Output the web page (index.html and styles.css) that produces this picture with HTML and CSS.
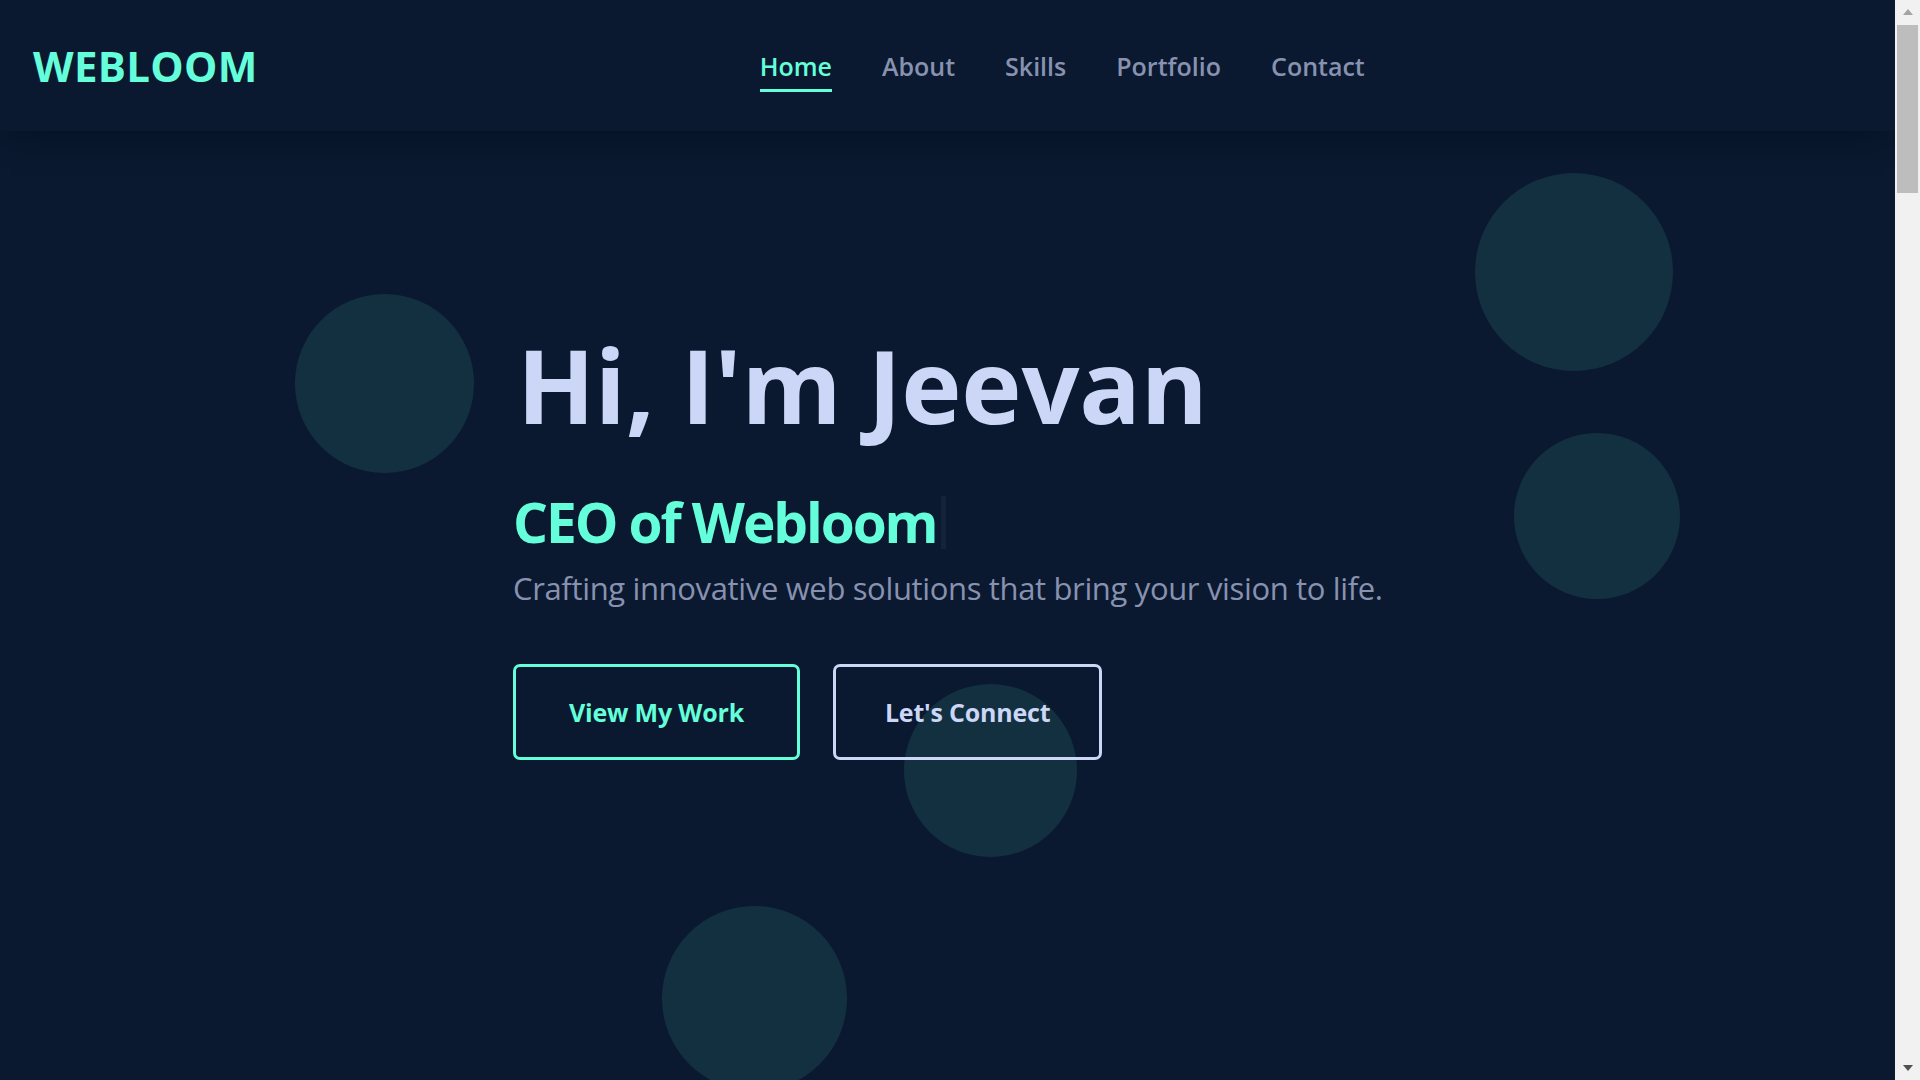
FILE: index.html
```html
<!DOCTYPE html>
<html lang="en">
<head>
<meta charset="UTF-8">
<title>Webloom | Jeevan</title>
<link rel="stylesheet" href="styles.css">
</head>
<body>
<div class="page">
  <header class="site-header">
    <a class="logo" href="#home">WEBLOOM</a>
    <nav class="nav">
      <a class="nav-link active" href="#home">Home</a>
      <a class="nav-link" href="#about">About</a>
      <a class="nav-link" href="#skills">Skills</a>
      <a class="nav-link" href="#portfolio">Portfolio</a>
      <a class="nav-link" href="#contact">Contact</a>
    </nav>
  </header>

  <main>
    <section class="hero" id="home">
      <div class="bubble b1"></div>
      <div class="bubble b2"></div>
      <div class="bubble b3"></div>
      <div class="bubble b4"></div>
      <div class="bubble b5"></div>
      <div class="hero-inner">
        <h1 class="hero-title">Hi, I'm Jeevan</h1>
        <h2 class="hero-role">CEO of Webloom<span class="caret"></span></h2>
        <p class="hero-text">Crafting innovative web solutions that bring your vision to life.</p>
        <div class="hero-actions">
          <a class="btn btn-primary" href="#portfolio">View My Work</a>
          <a class="btn btn-secondary" href="#contact">Let's Connect</a>
        </div>
      </div>
    </section>
  </main>
</div>
<div class="scrollbar" aria-hidden="true">
  <div class="sb-button"><span class="sb-arrow-up"></span></div>
  <div class="sb-track"><div class="sb-thumb"></div></div>
  <div class="sb-button"><span class="sb-arrow-down"></span></div>
</div>
</body>
</html>
```

FILE: styles.css
```css
* { box-sizing: border-box; margin: 0; padding: 0; }

html, body {
  height: 100%;
  background: #0a192f;
}

body {
  display: flex;
  height: 100vh;
  overflow: hidden;
  font-family: "Open Sans", "Noto Sans", sans-serif;
  color: #ccd6f6;
}

a { text-decoration: none; }

.page {
  flex: 1;
  min-width: 0;
  overflow: hidden;
}

/* scrollbar strip */
.scrollbar {
  width: 25px;
  flex-shrink: 0;
  display: flex;
  flex-direction: column;
  background: #f1f1f1;
}

.sb-button {
  height: 25px;
  display: flex;
  align-items: center;
  justify-content: center;
}

.sb-arrow-up {
  width: 0;
  height: 0;
  border-left: 5.5px solid transparent;
  border-right: 5.5px solid transparent;
  border-bottom: 6px solid #a3a3a3;
  margin-top: -1px;
}

.sb-arrow-down {
  width: 0;
  height: 0;
  border-left: 5.5px solid transparent;
  border-right: 5.5px solid transparent;
  border-top: 6px solid #505050;
  margin-top: 1px;
}

.sb-track {
  flex: 1;
  padding: 0 2px;
}

.sb-thumb {
  height: 168px;
  background: #bdbdbd;
}

/* header */
.site-header {
  height: 131px;
  display: flex;
  align-items: center;
  padding: 0 33px;
  background: #0a192f;
  box-shadow: 0 10px 30px -10px rgba(2, 12, 27, 0.7);
  position: relative;
  z-index: 10;
}

.logo {
  font-size: 42px;
  font-weight: 700;
  letter-spacing: 0.3px;
  color: #64ffda;
}

.nav {
  display: flex;
  gap: 50px;
  margin-left: 502px;
}

.nav-link {
  position: relative;
  font-size: 25px;
  font-weight: 600;
  color: #8892b0;
}

.nav-link.active {
  color: #64ffda;
}

.nav-link.active::after {
  content: "";
  position: absolute;
  left: 0;
  right: 0;
  bottom: -9px;
  height: 3px;
  background: #64ffda;
}

/* hero */
.hero {
  position: relative;
  height: 949px;
  overflow: hidden;
  padding-top: 198px;
}

.bubble {
  position: absolute;
  border-radius: 50%;
  background: rgba(100, 255, 218, 0.1);
}

.b1 { left: 295px; top: 163px; width: 179px; height: 179px; }
.b2 { left: 1475px; top: 42px; width: 198px; height: 198px; }
.b3 { left: 1514px; top: 302px; width: 166px; height: 166px; }
.b4 { left: 904px; top: 553px; width: 173px; height: 173px; }
.b5 { left: 662px; top: 775px; width: 185px; height: 185px; }

.hero-inner {
  position: relative;
  width: 869px;
  margin: 0 auto;
}

.hero-title {
  font-size: 102px;
  line-height: 112px;
  font-weight: 700;
  color: #ccd6f6;
  letter-spacing: -0.2px;
  margin-left: 4px;
}

.hero-role {
  margin-top: 48px;
  font-size: 55px;
  line-height: 66px;
  font-weight: 700;
  color: #64ffda;
  letter-spacing: -2.1px;
  display: flex;
  align-items: center;
}

.caret {
  display: inline-block;
  width: 5px;
  height: 53px;
  margin-left: 4px;
  background: #14233a;
}

.hero-text {
  margin-top: 13px;
  font-size: 31px;
  line-height: 40px;
  font-weight: 400;
  color: #8892b0;
  letter-spacing: -0.35px;
  white-space: nowrap;
}

.hero-actions {
  display: flex;
  gap: 33px;
  margin-top: 56px;
}

.btn {
  display: inline-block;
  padding: 29px 52px;
  font-size: 25px;
  line-height: 32px;
  font-weight: 700;
  letter-spacing: -0.2px;
  border-radius: 7px;
  border: 3px solid;
  background: transparent;
}

.btn-primary {
  padding-left: 53px;
  padding-right: 53px;
  color: #64ffda;
  border-color: #64ffda;
}

.btn-secondary {
  padding-left: 49px;
  padding-right: 49px;
  color: #ccd6f6;
  border-color: #ccd6f6;
}
```
